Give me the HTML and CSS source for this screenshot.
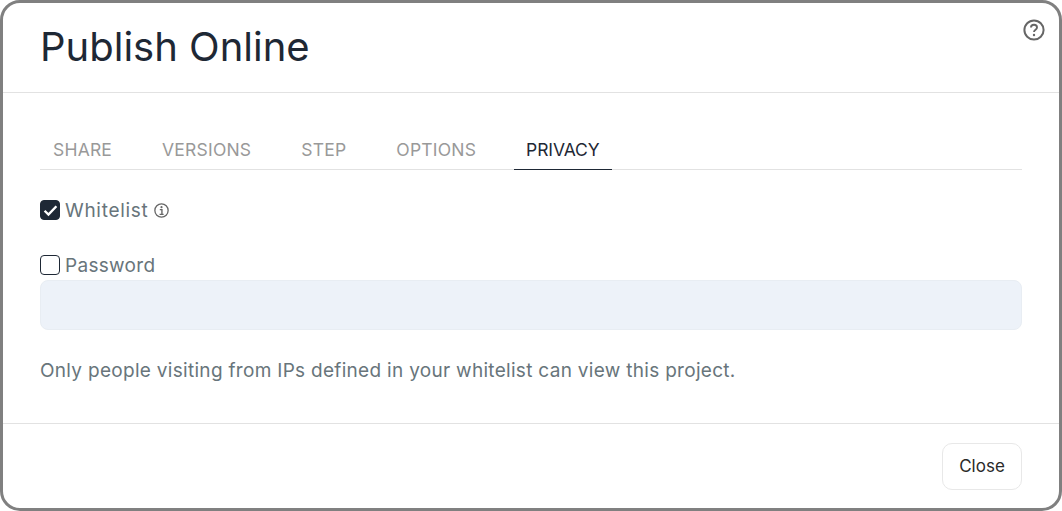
FILE: index.html
```html
<!DOCTYPE html>
<html>
<head>
    <title>Publish Online</title>
    <link rel="stylesheet" href="styles.css">
</head>
<body>

    <div class="modal">
        <header class="modal-header">
            <h1>Publish Online</h1>
            <a class="help-link" href="#" aria-label="Help">
                <svg width="22" height="22" viewBox="0 0 22 22" fill="none" stroke="#666" stroke-width="2">
                    <circle cx="11" cy="11" r="9.6"/>
                    <path d="M8 8.6c0-1.8 1.4-2.8 3-2.8s3 1 3 2.7c0 2.3-3 2.2-3 4.6" stroke-width="1.9"/>
                    <circle cx="11" cy="16" r="1.2" fill="#666" stroke="none"/>
                </svg>
            </a>
        </header>

        <div class="modal-body">
            <nav class="tabs">
                <a href="#" class="tab">SHARE</a>
                <a href="#" class="tab">VERSIONS</a>
                <a href="#" class="tab">STEP</a>
                <a href="#" class="tab">OPTIONS</a>
                <a href="#" class="tab active">PRIVACY</a>
            </nav>

            <div class="field whitelist-field">
                <span class="check checked">
                    <svg width="15" height="13" viewBox="0 0 14 12" fill="none" stroke="#fff" stroke-width="2.2">
                        <path d="M1.5 6.2l3.6 3.6L12.5 2"/>
                    </svg>
                </span>
                <span class="field-label wide">Whitelist</span>
                <svg class="info-icon" width="15" height="15" viewBox="0 0 14 14" fill="none" stroke="#666">
                    <circle cx="7" cy="7" r="6.2" stroke-width="1.2"/>
                    <path d="M5.4 6.2H7.4V10.4M5.2 10.6H9" stroke-width="1.3"/>
                    <circle cx="7" cy="3.9" r="1" fill="#666" stroke="none"/>
                </svg>
            </div>

            <div class="field password-field">
                <span class="check"></span>
                <span class="field-label">Password</span>
            </div>
            <input class="text-input" type="text">

            <p class="hint">Only people visiting from IPs defined in your whitelist can view this project.</p>
        </div>

        <footer class="modal-footer">
            <button class="close-btn">Close</button>
        </footer>
    </div>

</body>
</html>
```

FILE: styles.css
```css
* {
    box-sizing: border-box;
}

html, body {
    height: 100%;
}

body {
    margin: 0;
    background-color: #fff;
    font-family: Inter, "Noto Sans", sans-serif;
}

.modal {
    display: flex;
    flex-direction: column;
    height: 511px;
    border: 3px solid #808080;
    border-radius: 20px;
    background-color: #fff;
}

.modal-header {
    display: flex;
    justify-content: space-between;
    height: 90px;
    padding: 0 14px 0 37px;
    border-bottom: 1px solid #e2e2e2;
}

.modal-header h1 {
    margin: 21px 0 0;
    font-size: 40px;
    line-height: 46px;
    font-weight: 400;
    color: #1e2835;
}

.help-link {
    margin-top: 16px;
    height: 22px;
}

.modal-body {
    flex: 1;
    padding: 39px 37px 0 37px;
}

.tabs {
    display: flex;
    gap: 26px;
    height: 38px;
    padding-left: 1px;
    border-bottom: 1px solid #e2e2e2;
}

.tab {
    height: 38px;
    padding: 8px 12px 0;
    font-size: 17.5px;
    letter-spacing: 0.2px;
    line-height: 20px;
    color: #999;
    text-decoration: none;
}

.tab.active {
    color: #1e2835;
    letter-spacing: -0.1px;
    border-bottom: 1px solid #1e2835;
}

.field {
    display: flex;
    align-items: center;
    height: 20px;
}

.whitelist-field {
    margin-top: 30px;
}

.password-field {
    margin-top: 35px;
}

.check {
    display: flex;
    justify-content: center;
    align-items: center;
    width: 20px;
    height: 20px;
    margin-right: 5px;
    border: 1px solid #1e2835;
    border-radius: 4px;
}

.check.checked {
    background-color: #1e2835;
}

.field-label {
    font-size: 19px;
    letter-spacing: 0.3px;
    color: #68757b;
}

.field-label.wide {
    letter-spacing: 0.7px;
}

.info-icon {
    margin-left: 6px;
}

.text-input {
    display: block;
    width: 100%;
    height: 50px;
    margin-top: 5px;
    border: 1px solid #e8edf3;
    border-radius: 8px;
    background-color: #edf2f9;
}

.hint {
    margin: 29px 0 0;
    font-size: 19px;
    letter-spacing: 0.3px;
    line-height: 24px;
    color: #68757b;
}

.modal-footer {
    display: flex;
    justify-content: flex-end;
    height: 85px;
    padding: 19px 37px 0 0;
    border-top: 1px solid #e2e2e2;
}

.close-btn {
    width: 80px;
    height: 47px;
    padding-bottom: 3px;
    border: 1px solid #e8e8e8;
    border-radius: 10px;
    background-color: #fff;
    font-family: inherit;
    font-size: 17px;
    color: #2a2a2a;
}
```
